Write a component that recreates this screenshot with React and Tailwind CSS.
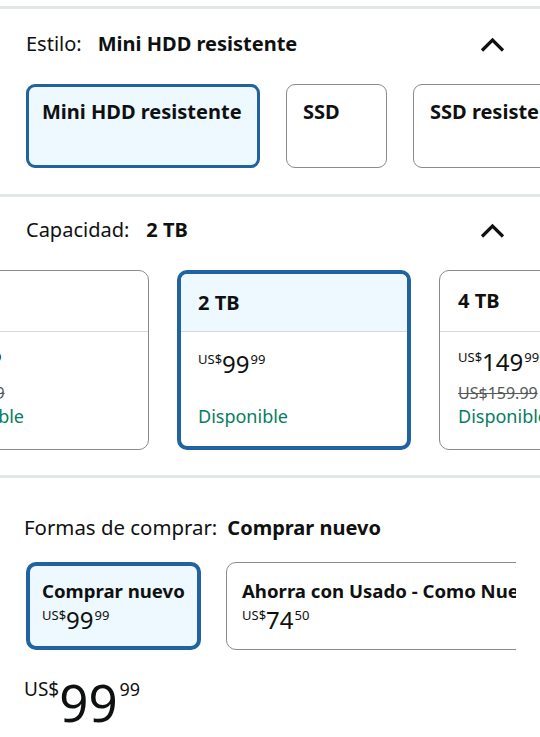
const BLUE = 'border-[#2162a1]';

function Chevron() {
  return (
    <svg width="25" height="15" viewBox="0 0 25 15" fill="none">
      <path d="M2 13.5 L12.5 3 L23 13.5" stroke="#0f1111" strokeWidth="3.2" />
    </svg>
  );
}

function Price({ whole, frac, big }) {
  if (big) {
    return (
      <div className="flex items-start leading-none text-[#0f1111]">
        <span className="text-[19px] mt-[3px]">US$</span>
        <span className="text-[51px]">{whole}</span>
        <span className="text-[18px] mt-[3px] ml-[2px]">{frac}</span>
      </div>
    );
  }
  return (
    <div className="flex items-start leading-none text-[#0f1111]">
      <span className="text-[13px]">US$</span>
      <span className="text-[24px] mt-[-1px]">{whole}</span>
      <span className="text-[13px] ml-[1px]">{frac}</span>
    </div>
  );
}

function Heading({ label, value, gap, chevron }) {
  return (
    <div className="flex items-center justify-between pl-[26px] pr-[35px] h-[28px]">
      <div className="flex items-baseline text-[20px] leading-[28px]">
        <span>{label}</span>
        <span className={`font-bold ${gap}`}>{value}</span>
      </div>
      {chevron && <Chevron />}
    </div>
  );
}

function StyleButton({ label, selected, w }) {
  return (
    <div
      className={`shrink-0 h-[84px] rounded-[9px] px-[13px] font-bold text-[20px] leading-[26px] ${w} ${
        selected ? `border-[3px] ${BLUE} bg-[#edf8ff] pt-[12px]` : 'border border-[#888c8c] bg-white pt-[14px] pl-[16px]'
      }`}
    >
      <span className="whitespace-nowrap">{label}</span>
    </div>
  );
}

function SizeCard({ size, whole, frac, list, selected, className = '' }) {
  return (
    <div
      className={`shrink-0 w-[234px] h-[180px] rounded-[10px] overflow-hidden flex flex-col ${className} ${
        selected ? `border-[4px] ${BLUE}` : 'border border-[#888c8c]'
      }`}
    >
      <div
        className={`flex items-center border-b border-[#d5d9d9] font-bold text-[20px] leading-[26px] ${
          selected ? 'h-[58px] bg-[#edf8ff] px-[17px]' : 'h-[61px] px-[18px]'
        }`}
      >
        {size}
      </div>
      <div className={`flex-1 flex flex-col ${selected ? 'px-[17px] pt-[21px] pb-[18px]' : 'px-[18px] pt-[19px] pb-[21px]'}`}>
        <Price whole={whole} frac={frac} />
        {list && (
          <div className="mt-[9px] text-[16px] leading-[20px] text-[#565959] line-through whitespace-nowrap">{list}</div>
        )}
        <div className="mt-auto text-[18px] leading-[24px] text-[#067d62] whitespace-nowrap">Disponible</div>
      </div>
    </div>
  );
}

function BuyButton({ title, whole, frac, selected, w }) {
  return (
    <div
      className={`shrink-0 h-[88px] rounded-[10px] px-[12px] ${w} ${
        selected ? `border-[4px] ${BLUE} bg-[#edf8ff] pt-[13px]` : 'border border-[#888c8c] bg-white pt-[16px] pl-[15px]'
      }`}
    >
      <div className="font-bold text-[18.6px] leading-[24px] whitespace-nowrap">{title}</div>
      <div className="mt-[6px]">
        <Price whole={whole} frac={frac} />
      </div>
    </div>
  );
}

export default function App() {
  return (
    <div className="w-[540px] h-[737px] overflow-hidden bg-white text-[#0f1111] font-['Noto_Sans','Liberation_Sans',sans-serif]">
      <div className="mt-[6px] h-[3px] bg-[#e3e6e6]" />

      <section className="pt-[21px]">
        <Heading label="Estilo:" value="Mini HDD resistente" gap="ml-[16px]" chevron />
        <div className="mt-[26px] flex gap-[26px] pl-[26px] overflow-hidden">
          <StyleButton label="Mini HDD resistente" selected w="w-[234px]" />
          <StyleButton label="SSD" w="w-[101px]" />
          <StyleButton label="SSD resistente" w="w-[200px]" />
        </div>
      </section>

      <div className="mt-[26px] h-[3px] bg-[#e3e6e6]" />

      <section className="pt-[19px]">
        <Heading label="Capacidad:" value="2 TB" gap="ml-[17px]" chevron />
        <div className="mt-[26px] flex gap-[28px] overflow-hidden">
          <SizeCard size="1 TB" whole="79" frac="99" list="US$89.99" className="ml-[-85px]" />
          <SizeCard size="2 TB" whole="99" frac="99" selected />
          <SizeCard size="4 TB" whole="149" frac="99" list="US$159.99" />
        </div>
      </section>

      <div className="mt-[25px] h-[3px] bg-[#e3e6e6]" />

      <section className="pt-[35px] pl-[24px] pr-[24px]">
        <div className="flex items-baseline text-[20.4px] leading-[28px]">
          <span>Formas de comprar:</span>
          <span className="ml-[10px] font-bold text-[20px]">Comprar nuevo</span>
        </div>
        <div className="mt-[20px] ml-[2px] flex gap-[25px] overflow-hidden">
          <BuyButton title="Comprar nuevo" whole="99" frac="99" selected w="w-[175px]" />
          <BuyButton title="Ahorra con Usado - Como Nuevo" whole="74" frac="50" w="w-[330px]" />
        </div>
        <div className="mt-[27px]">
          <Price whole="99" frac="99" big />
        </div>
      </section>
    </div>
  );
}
